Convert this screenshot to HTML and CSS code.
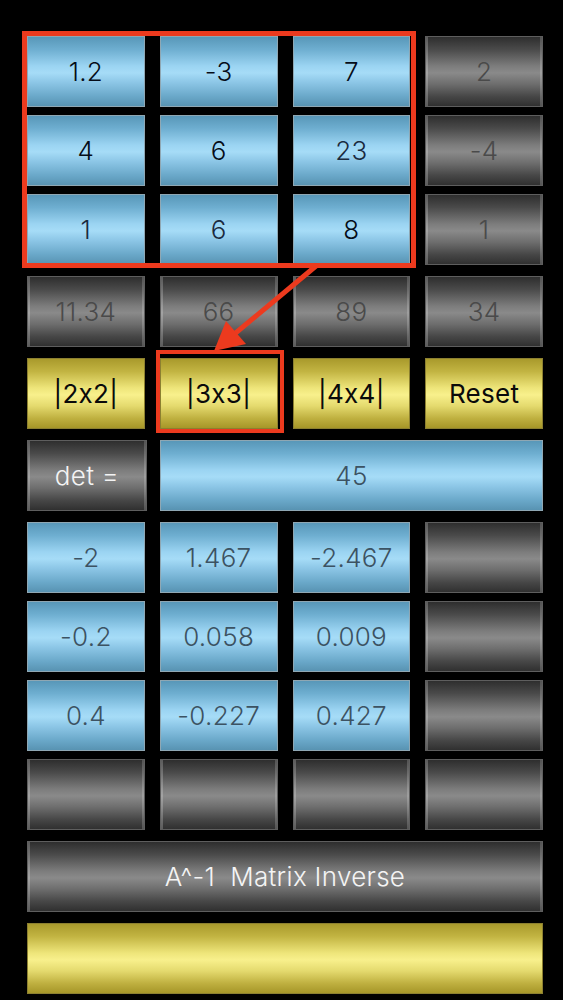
FILE: index.html
```html
<!DOCTYPE html>
<html>
<head>
<meta charset="utf-8">
<link rel="stylesheet" href="styles.css">
</head>
<body>
<div class="board">
  <div class="row">
    <div class="cell blue in">1.2</div>
    <div class="cell blue in">-3</div>
    <div class="cell blue in">7</div>
    <div class="cell gray">2</div>
  </div>
  <div class="row tight">
    <div class="cell blue in">4</div>
    <div class="cell blue in">6</div>
    <div class="cell blue in2">23</div>
    <div class="cell gray">-4</div>
  </div>
  <div class="row tight">
    <div class="cell blue in2">1</div>
    <div class="cell blue in2">6</div>
    <div class="cell blue in">8</div>
    <div class="cell gray">1</div>
  </div>
  <div class="row">
    <div class="cell gray">11.34</div>
    <div class="cell gray">66</div>
    <div class="cell gray">89</div>
    <div class="cell gray">34</div>
  </div>
  <div class="row">
    <div class="cell yellow">|2x2|</div>
    <div class="cell yellow">|3x3|</div>
    <div class="cell yellow">|4x4|</div>
    <div class="cell yellow">Reset</div>
  </div>
  <div class="row det">
    <div class="cell gray label">det =</div>
    <div class="cell blue out wide3">45</div>
  </div>
  <div class="row">
    <div class="cell blue out">-2</div>
    <div class="cell blue out">1.467</div>
    <div class="cell blue out">-2.467</div>
    <div class="cell gray"></div>
  </div>
  <div class="row tight">
    <div class="cell blue out">-0.2</div>
    <div class="cell blue out">0.058</div>
    <div class="cell blue out">0.009</div>
    <div class="cell gray"></div>
  </div>
  <div class="row tight">
    <div class="cell blue out">0.4</div>
    <div class="cell blue out">-0.227</div>
    <div class="cell blue out">0.427</div>
    <div class="cell gray"></div>
  </div>
  <div class="row tight">
    <div class="cell gray"></div>
    <div class="cell gray"></div>
    <div class="cell gray"></div>
    <div class="cell gray"></div>
  </div>
  <div class="row">
    <div class="cell gray label full">A^-1&nbsp; Matrix Inverse</div>
  </div>
  <div class="row">
    <div class="cell yellow full"></div>
  </div>

  <div class="hl hl-matrix"></div>
  <div class="hl hl-btn"></div>
  <svg class="arrow" width="563" height="400" viewBox="0 0 563 400">
    <line x1="316" y1="266" x2="232" y2="336" stroke="#ec3a1e" stroke-width="5" stroke-linecap="round"/>
    <polygon points="214,351 226,321 246,344" fill="#ec3a1e"/>
  </svg>
</div>
</body>
</html>
```
FILE: styles.css
```css
html, body {
  margin: 0;
  padding: 0;
  background: #000;
}
body {
  width: 563px;
  height: 1000px;
  overflow: hidden;
  font-family: Inter, "Liberation Sans", sans-serif;
}
.board {
  position: relative;
  padding: 36px 20px 0 27px;
  width: 516px;
}
.row {
  display: grid;
  grid-template-columns: repeat(4, 1fr);
  column-gap: 15px;
  height: 71px;
  margin-top: 11px;
}
.row:first-child { margin-top: 0; }
.row.tight { margin-top: 8px; }
.row.det { grid-template-columns: 120px 1fr; column-gap: 13px; }

.cell {
  box-sizing: border-box;
  display: flex;
  align-items: center;
  justify-content: center;
  font-size: 26px;
  font-weight: 300;
  letter-spacing: 0.3px;
}
.wide3 { grid-column: 2 / span 1; }
.full { grid-column: 1 / -1; }

.blue {
  background: linear-gradient(to bottom,
    #5897b8 0%, #6eaed0 18%, #9bd4f2 42%, #a6dcf7 52%, #8cc6e6 66%, #6aa8c9 86%, #5893b2 100%);
  border: 1px solid #8fa7b3;
  color: #1a2a3c;
}
.blue.in { color: #050c18; }
.blue.in2 { color: #1a2a3e; }
.blue.out { color: #3c5262; }

.gray {
  background: linear-gradient(to bottom,
    #2e2e2e 0%, #4a4a4a 18%, #7c7c7c 42%, #8a8a8a 52%, #6e6e6e 68%, #474747 86%, #303030 100%);
  border: 1px solid #5e5e5e;
  box-shadow: inset 2px 0 0 rgba(255,255,255,0.22), inset -2px 0 0 rgba(255,255,255,0.18);
  color: #4a4a4a;
}
.gray.label { color: #f4f4f4; }

.yellow {
  background: linear-gradient(to bottom,
    #a99a2c 0%, #c2b442 18%, #eee57a 42%, #f8f08c 52%, #e4da6e 68%, #bfb040 86%, #a69628 100%);
  border: 1px solid #8c8030;
  color: #0a0a0a;
  font-weight: 400;
}

.hl {
  position: absolute;
  box-sizing: border-box;
  border: 5px solid #ec3a1e;
  pointer-events: none;
}
.hl-matrix {
  left: 22px;
  top: 31px;
  width: 394px;
  height: 237px;
}
.hl-btn {
  left: 156px;
  top: 350px;
  width: 128px;
  height: 83px;
  border-width: 4.5px;
}
.arrow {
  position: absolute;
  left: 0;
  top: 0;
  pointer-events: none;
}
```
